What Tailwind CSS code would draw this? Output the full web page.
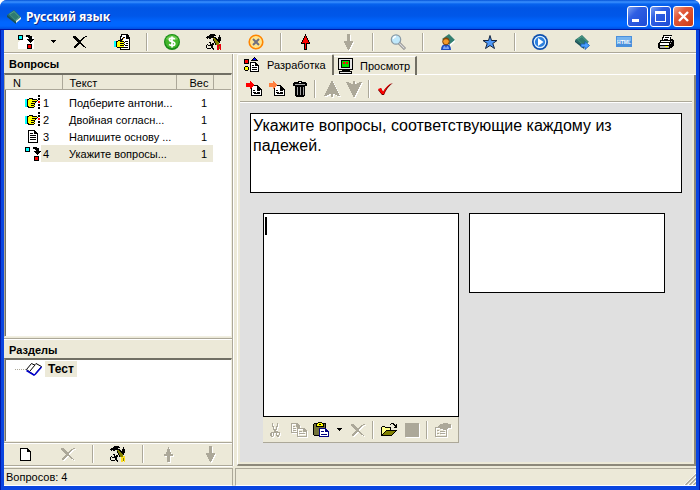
<!DOCTYPE html>
<html lang="ru">
<head>
<meta charset="utf-8">
<title>Русский язык</title>
<script src="https://cdn.jsdelivr.net/npm/@tailwindcss/browser@4"></script>
</head>
<body class="bg-white font-['Liberation_Sans',Arial,sans-serif] text-[11px] leading-[14px] text-black">
<svg class="hidden" aria-hidden="true">
  <defs>
    <symbol id="link" viewBox="0 0 16 16"><path fill="#000" d="M0 1h5v5H0zM8 1h4v1h2v3h2v1h-1v1h-1v1h-1v1h-1V8h-1V7h-1V6H9V5h2V4h-1V3H8zM9 10h5v5H9z"/><path fill="#0ff" d="M1 2h3v3H1z"/><path fill="red" d="M10 11h3v3h-3z"/></symbol>
    <symbol id="cross" viewBox="0 0 16 16"><path fill="currentColor" d="M1 2h3v1h1v1h1v1h1v1h2V5h1V4h1V3h2V2h2v1h-2v1h-1v1h-1v1h-1v1H9v2h1v1h1v1h1v1h1v1h1v1h-1v-1h-2v-1h-1v-1H9v-1H7v1H6v1H5v1H4v1H2v-2h1v-1h1v-1h1V9h1V8H5V7H4V6H3V5H2V4H1z"/></symbol>
    <symbol id="tools" viewBox="0 0 16 16"><path fill="#000" d="M3 1h1V0h5v1h1v1H8v1h1v1H8v1H7V4H5v1H3V4H2v1H1V4H0V3h1V2h2zM13 1h1v2h1v4h-1v2h-1V7h-1V3h1z"/><path fill="#808000" d="M7 4h2v1h1v1h1v1h1v1h1v2h1v2h1v3h-2v-2h-1v-1h-1v-1h-1V9H9V7H8V6H7z"/><path fill="#000" d="M7 5h1v2h1v2h1v2H9V9H8V7H7zM9 3h1v1h1v1h1v1h1v2h-1V7h-1V6h-1V5H9z"/><path fill="none" stroke="#000" d="M2.500 8.500h2v3h-2l-1-1-1 1v2l1 1h3l1-1v-2l1-2h1v1l-1 1v2l1 2h-1"/><path fill="currentColor" d="M11 11h2v-1h2v6h-1v-4h-1v4h-2z"/></symbol>
    <symbol id="up" viewBox="0 0 16 16"><path fill="currentColor" d="M8 1h1v2h1v3h1v2h2v2h-3v6H7v-6H4V8h2V6h1V3h1z"/></symbol>
    <symbol id="down" viewBox="0 0 16 16"><path fill="currentColor" d="M7 0h3v7h3v2h-1v2h-1v2h-1v2H9v1H8v-1H7v-2H6v-2H5V9H4V7h3z"/></symbol>
    <symbol id="hand" viewBox="0 0 16 16"><path fill="#ff0" d="M2 4h6v1h4v2h-2v5H3L2 11z"/><path fill="#0ff" d="M0 4h2v8H0z"/><path fill="#000" d="M2 4h2V3h4v1H4v1H3v6h1v1h5v1H3v-1H2zM7 4h5v1h1v1h-1v1H7V6h5V5H7zM6 8h4v1H6zM6 10h3v1H6zM10 7h1v1h-1zM9 9h1v1H9zM9 11h1v1H9zM13 0h2v2h-2zM13 3h2v2h-2zM13 9h2v2h-2zM13 12h2v2h-2z"/><path fill="red" d="M13 6h2v2h-2z"/></symbol>
    <symbol id="doc" viewBox="0 0 16 16"><path fill="#000" d="M3 1h7v1h1v1h1v1h1v10H3z"/><path fill="#fff" d="M4 2h5v3h3v8H4z"/><path d="M5 4h3v1H5zM5 6h6v1H5zM5 8h6v1H5zM5 10h6v1H5z"/></symbol>
    <symbol id="page" viewBox="0 0 16 16"><path d="M5 4h7v1h1v1h1v1h1v1h1v7H5z"/><path fill="#fff" d="M6 5h5v4h4v5H6z"/><path d="M7 9h2v1H7zM11 9h3v1h-3zM7 11h3v1H7zM11 11h3v1h-3zM8 13h6v-1H8z"/></symbol>
    <symbol id="book" viewBox="0 0 16 16"><path fill="#2a6e68" d="M1 6 8 1l7 7-5 6z"/><path fill="#55a68b" d="m3 5 5-3 6 6-4 4z"/><path fill="#2f7a70" d="m4 5.500 4-2.500 5 5-3.500 3z"/><path fill="#185058" d="m1 6 9 7v2L1 8z"/><path fill="#f4f7e9" d="m10 12 5-4v2l-5 4z"/></symbol>
    <symbol id="vup" viewBox="0 0 16 16"><path fill="currentColor" d="M7 0h2v2h1v2h1v2h1v2h1v2h1v2h1v2h1v1h-3v-1h-2v-1H9v3H7v-3H5v1H3v1H0v-1h1v-2h1v-2h1V8h1V6h1V4h1V2h1z"/></symbol>
  </defs>
</svg>

<div class="flex h-screen min-h-[440px] flex-col overflow-hidden rounded-t-[7px] bg-[#0a45e0]">
  <header class="flex h-[30px] shrink-0 items-center bg-[linear-gradient(#0453d8_0px,#3b91ff_2px,#0763ee_4px,#0055e5_8px,#0057e9_16px,#0066ff_22px,#0066ff_26px,#004fe0_29px,#003bc6_30px)] pr-[6px] pl-[6px] pt-[3px]">
    <svg class="h-4 w-4" viewBox="0 0 16 16"><use href="#book"/></svg>
    <h1 class="ml-[4px] flex-1 font-['Noto_Sans','Open_Sans',sans-serif] text-[12px] leading-5 font-bold text-white [text-shadow:1px_1px_#0b2a8a]">Русский язык</h1>
    <div class="flex gap-[2px]">
      <button aria-label="Свернуть" class="h-[21px] w-[21px] rounded-[3px] border border-white bg-[linear-gradient(135deg,#7ba0f2,#2f5fe3_35%,#1d4bd6)]"><svg class="h-[19px] w-[19px]" viewBox="0 0 19 19"><path fill="#fff" d="M4 12h7v3H4z"/></svg></button>
      <button aria-label="Развернуть" class="h-[21px] w-[21px] rounded-[3px] border border-white bg-[linear-gradient(135deg,#7ba0f2,#2f5fe3_35%,#1d4bd6)]"><svg class="h-[19px] w-[19px]" viewBox="0 0 19 19"><path fill="#fff" fill-rule="evenodd" d="M4 4h11v11H4zM5 7v7h9V7z"/></svg></button>
      <button aria-label="Закрыть" class="h-[21px] w-[21px] rounded-[3px] border border-white bg-[linear-gradient(135deg,#f0a58c,#e2593a_35%,#cc3a12)]"><svg class="h-[19px] w-[19px]" viewBox="0 0 19 19"><path stroke="#fff" stroke-width="2.4" d="m5 5 9 9m0-9-9 9"/></svg></button>
    </div>
  </header>

  <div class="mx-px flex min-h-0 flex-1 flex-col border-x-[3px] border-b-4 border-[#0a45e0] bg-[#ece9d8] shadow-[0_0_0_1px_#0019a8]">
    <div role="toolbar" aria-label="Главная панель" class="flex h-[24px] shrink-0 items-center border-b border-white pl-px shadow-[inset_0_-1px_#aca899]">
      <button aria-label="Добавить вопрос" class="flex w-[42px] justify-center"><svg class="h-4 w-4" shape-rendering="crispEdges" viewBox="0 0 16 16"><path fill="#fff" d="M5 3h11v12H0V8z"/><use href="#link"/></svg></button>
      <button aria-label="Тип вопроса" class="flex w-[12px] justify-center"><svg class="h-[3px] w-[5px]" viewBox="0 0 5 3" shape-rendering="crispEdges"><path d="M0 0h5v1H4v1H3v1H2V2H1V1H0z"/></svg></button>
      <button aria-label="Удалить" class="flex w-[42px] justify-center"><svg class="h-4 w-4" shape-rendering="crispEdges"><use href="#cross"/></svg></button>
      <button aria-label="Изменить" class="flex w-[42px] justify-center"><svg class="h-4 w-4" viewBox="0 0 16 16" shape-rendering="crispEdges"><path d="M7 0h7v1h1v2h1v13H6V2h1z"/><path fill="#fff" d="M8 1h5v3h2v11H7V3h1z"/><path d="M12 1h1v3h2v1h-3zM11 7h3v1h-3zM12 9h2v1h-2zM11 11h3v1h-3zM9 13h5v1H9z"/><path fill="#ff0" d="M2 7h2V6h5v2h1v5H3z"/><path fill="#0ff" d="M0 7h2v6H0z"/><path d="M2 7h2v1H3v5h6v1H3v-1H2zM4 6h3v1H4zM7 5h1V4h1V3h2v1h-1v1H9v1H8v1h2v1H6V7h1zM6 9h4v1H6zM6 11h4v1H6zM10 8h1v1h-1zM10 10h1v1h-1z"/><path fill="#f90" d="M9 4h1v1H9z"/></svg></button>
      <span class="mx-[3px] h-[18px] w-[2px] border-r border-white bg-[#aca899]"></span>
      <button aria-label="Стоимость" class="flex w-[42px] justify-center"><svg class="h-4 w-4" viewBox="0 0 16 16"><circle cx="8" cy="8" r="8" fill="#168b16"/><circle cx="8" cy="7.5" r="6.8" fill="#43b52b"/><path fill="#8bd66e" opacity=".65" d="M2 5a6.5 5 0 0 1 12 0Q8 8 2 5z"/><path fill="none" stroke="#fff" stroke-width="1.7" d="M10.8 5.1C9 3.6 5.3 3.7 5.4 5.9 5.5 8.2 10.8 7 10.8 9.7c0 2.3-4 2.3-5.700.7M8 2.5v11"/></svg></button>
      <button aria-label="Параметры" class="flex w-[42px] justify-center text-red-600"><svg class="h-4 w-4" shape-rendering="crispEdges"><use href="#tools"/></svg></button>
      <button aria-label="Отмена" class="flex w-[42px] justify-center"><svg class="h-4 w-4" viewBox="0 0 16 16"><circle cx="8" cy="8" r="6.8" fill="#ffe58e" stroke="#ff8500" stroke-width="1.6"/><path stroke="#707080" stroke-width="2" d="m5 5 6 6m0-6-6 6"/></svg></button>
      <span class="mx-[3px] h-[18px] w-[2px] border-r border-white bg-[#aca899]"></span>
      <button aria-label="Вверх" class="flex w-[42px] justify-center"><svg class="h-4 w-4" viewBox="0 0 16 16" shape-rendering="crispEdges"><path d="M7 0h1v2h1v2h1v2h1v2h1v2H9v6H6v-6H3V8h1V6h1V4h1V2h1z"/><path fill="red" d="M7 2h1v2h1v2h1v2h1v1H8v6H7V9H4V8h1V6h1V4h1z"/></svg></button>
      <button aria-label="Вниз" disabled class="flex w-[42px] justify-center text-[#aca899] drop-shadow-[1px_1px_0_#fff]"><svg class="h-4 w-4" shape-rendering="crispEdges"><use href="#down"/></svg></button>
      <span class="mx-[3px] h-[18px] w-[2px] border-r border-white bg-[#aca899]"></span>
      <button aria-label="Поиск" class="flex w-[42px] justify-center"><svg class="h-4 w-4" viewBox="0 0 16 16"><path stroke="#858585" stroke-width="3" d="m9 9 6 6"/><path stroke="#ddd" stroke-width="1.2" d="m9 9 5.5 5.5"/><circle cx="6" cy="5.5" r="4.7" fill="#bfe8fb" stroke="#8a9aa5" stroke-width="1.2"/><path fill="none" stroke="#fff" stroke-width="1.3" d="M3.3 5Q3.5 2.8 6 2.5"/></svg></button>
      <span class="mx-[3px] h-[18px] w-[2px] border-r border-white bg-[#aca899]"></span>
      <button aria-label="Ученик" class="flex w-[42px] justify-center"><svg class="h-4 w-4" viewBox="0 0 16 16"><path fill="#347f70" d="m2 5 7-5 6 6-5 5z"/><path fill="#fff" d="m10 10 5-4v2l-5 4z"/><path fill="#1c4cc0" d="M1 16q0-6 5-6t5 6z"/><path fill="#7ba3f4" d="M3 15q0-3 2-3l1 2 1-2q2 0 2 3z"/><circle cx="6" cy="7.5" r="3.3" fill="#f59a28" stroke="#7a400b"/><path fill="#84450a" d="M3 6q1-3 4-2.5 2 .5 2 2.5Q6 4.500 3 6z"/></svg></button>
      <button aria-label="Избранное" class="flex w-[42px] justify-center"><svg class="h-4 w-4" viewBox="0 0 16 16"><path fill="#4c97f8" stroke="#14233d" d="m8 1.500 1.500 5H15L10.800 9.500l1.700 5L8 11.500l-4.500 3 1.700-5L1 6.500h5.500z"/></svg></button>
      <span class="mx-[3px] h-[18px] w-[2px] border-r border-white bg-[#aca899]"></span>
      <button aria-label="Запуск" class="flex w-[42px] justify-center"><svg class="h-4 w-4" viewBox="0 0 16 16"><circle cx="8" cy="8" r="8" fill="#0d4fae"/><circle cx="8" cy="8" r="5.700" fill="#2d80dd" stroke="#d9efff" stroke-width="1.200"/><path fill="#fff" d="m6 4 5.500 4L6 12z"/></svg></button>
      <button aria-label="Экспорт" class="flex w-[42px] justify-center"><svg class="h-4 w-4" viewBox="0 0 16 16"><use href="#book"/><path fill="#4ba0ff" stroke="#175ab4" stroke-width=".8" d="M7 10h4V7.500l4.500 4-4.500 4V13H7z"/></svg></button>
      <button aria-label="HTML" class="flex w-[42px] justify-center"><svg class="h-4 w-4" viewBox="0 0 16 16"><path fill="#4a90dc" d="M0 2h16v11H0z"/><path fill="#76b4ef" d="M1 3h14v4H1z"/><text x="8" y="10" text-anchor="middle" fill="#fff" font-size="5" font-weight="bold" font-family="Liberation Sans">HTML</text></svg></button>
      <button aria-label="Печать" class="flex w-[42px] justify-center"><svg class="h-4 w-4" viewBox="0 0 16 16" shape-rendering="crispEdges"><path d="M5 1h9v1h-1v3h2v1h1v6h-1v1h-1v1h-2v1H1v-1H0V9h1V8h1V6h2V3h1z"/><path fill="#fff" d="M6 2h7v1h-1v3H5V4h1zM3 7h9v1H3zM2 9h9v2H2z"/><path d="M7 3h4v1H7zM6 5h4v1H6z"/><path fill="#b5b5b5" d="M2 12h9v2H2zM13 7h1v1h-1zM12 9h1v1h-1z"/><path fill="#ff0" d="M7 12h3v1H7z"/></svg></button>
    </div>

    <main class="flex min-h-0 flex-1">
      <aside class="flex w-[229px] shrink-0 flex-col border-r border-[#aca899] shadow-[1px_0_#fff]">
        <h2 class="h-[19px] pt-[3px] pl-[5px] font-bold">Вопросы</h2>
        <section class="min-h-0 flex-1 border border-t-2 border-t-[#716f64] border-l-[#aca899] border-r-[#f1efe2] border-b-[#f1efe2] bg-white shadow-[inset_1px_0_#716f64]">
          <table class="w-full table-fixed border-collapse">
            <colgroup><col class="w-[57px]"><col class="w-[114px]"><col class="w-[37px]"><col></colgroup>
            <thead><tr class="h-[15px] bg-[#ece9d8] shadow-[inset_0_-1px_#aca899]">
              <th class="border-r border-[#aca899] p-0 pl-[8px] text-left font-normal">N</th>
              <th class="border-r border-l border-r-[#aca899] border-l-white p-0 pl-[7px] text-left font-normal">Текст</th>
              <th class="border-r border-[#aca899] p-0 pr-[4px] text-right font-normal">Вес</th><th class="p-0"></th></tr></thead>
            <tbody>
              <tr class="h-[4px]"><td colspan="4" class="p-0"></td></tr>
              <tr class="h-[17px]"><td class="p-0 pl-[20px]"><span class="flex items-center"><svg class="h-4 w-4" shape-rendering="crispEdges"><use href="#hand"/></svg><span class="pl-[2px]">1</span></span></td><td class="truncate p-0 pl-[7px]">Подберите антони...</td><td class="p-0 pr-[6px] text-right">1</td><td></td></tr>
              <tr class="h-[17px]"><td class="p-0 pl-[20px]"><span class="flex items-center"><svg class="h-4 w-4" shape-rendering="crispEdges"><use href="#hand"/></svg><span class="pl-[2px]">2</span></span></td><td class="truncate p-0 pl-[7px]">Двойная согласн...</td><td class="p-0 pr-[6px] text-right">1</td><td></td></tr>
              <tr class="h-[17px]"><td class="p-0 pl-[20px]"><span class="flex items-center"><svg class="h-4 w-4" shape-rendering="crispEdges"><use href="#doc"/></svg><span class="pl-[2px]">3</span></span></td><td class="truncate p-0 pl-[7px]">Напишите основу ...</td><td class="p-0 pr-[6px] text-right">1</td><td></td></tr>
              <tr class="h-[17px]" aria-selected="true"><td class="p-0 pl-[20px]"><span class="flex items-center"><svg class="h-4 w-4" shape-rendering="crispEdges"><use href="#link"/></svg><span class="h-[17px] flex-1 bg-[#ece9d8] pt-[2px] pl-[2px]">4</span></span></td><td class="truncate bg-[#ece9d8] p-0 pl-[7px]">Укажите вопросы...</td><td class="bg-[#ece9d8] p-0 pr-[6px] text-right">1</td><td></td></tr>
            </tbody>
          </table>
        </section>
        <h2 class="mt-px h-[20px] border-t border-[#aca899] pt-[4px] pl-[5px] font-bold shadow-[inset_0_1px_#fff]">Разделы</h2>
        <section class="h-[84px] shrink-0 border border-t-2 border-t-[#716f64] border-l-[#aca899] border-r-[#f1efe2] border-b-[#f1efe2] bg-white shadow-[inset_1px_0_#716f64]">
          <div class="flex items-center pt-px pl-[10px]"><span class="w-[11px] border-t border-dotted border-[#aca899]"></span>
            <svg class="h-4 w-4" viewBox="0 0 16 16"><path fill="#fff" stroke="#000" d="m.5 8.500 5-6 3 1.500 1.500-1.500 5.500 3-6 7-1.500 1.500z"/><path fill="none" stroke="#00c" stroke-width="1.500" d="m.5 9.500 7.500 4.500 1.500-1L15.500 6"/><path stroke="#000" d="M9 4 4 10"/></svg>
            <span class="ml-[3px] bg-[#ece9d8] px-[3px] py-px text-[12px] font-bold">Тест</span></div>
        </section>
        <div role="toolbar" aria-label="Разделы" class="flex h-[24px] shrink-0 items-center border-y border-[#aca899] pl-px shadow-[inset_0_1px_#fff,0_1px_#fff]">
          <button aria-label="Новый раздел" class="flex w-[42px] justify-center"><svg class="h-4 w-4" viewBox="0 0 16 16" shape-rendering="crispEdges"><path d="M2 2h8v1h1v1h1v1h1v10H2z"/><path fill="#fff" d="M3 3h6v3h3v8H3z"/></svg></button>
          <button aria-label="Удалить раздел" disabled class="flex w-[42px] justify-center text-[#aca899] drop-shadow-[1px_1px_0_#fff]"><svg class="h-4 w-4" shape-rendering="crispEdges"><use href="#cross"/></svg></button>
          <span class="mx-[3px] h-[18px] w-[2px] border-r border-white bg-[#aca899]"></span>
          <button aria-label="Параметры раздела" class="flex w-[42px] justify-center text-yellow-300"><svg class="h-4 w-4" shape-rendering="crispEdges"><use href="#tools"/></svg></button>
          <span class="mx-[3px] h-[18px] w-[2px] border-r border-white bg-[#aca899]"></span>
          <button aria-label="Раздел вверх" disabled class="flex w-[42px] justify-center text-[#aca899] drop-shadow-[1px_1px_0_#fff]"><svg class="h-4 w-4" shape-rendering="crispEdges"><use href="#up"/></svg></button>
          <button aria-label="Раздел вниз" disabled class="flex w-[42px] justify-center text-[#aca899] drop-shadow-[1px_1px_0_#fff]"><svg class="h-4 w-4" shape-rendering="crispEdges"><use href="#down"/></svg></button>
        </div>
      </aside>

      <section class="ml-[4px] flex min-w-0 flex-1 flex-col">
        <div role="tablist" class="flex h-[21px] shrink-0 items-end shadow-[inset_0_-1px_#fff]">
          <button role="tab" aria-selected="true" class="flex h-[21px] w-[97px] items-center gap-[7px] rounded-t-[2px] border-t border-r-2 border-l border-t-white border-r-[#716f64] border-l-white bg-[#ece9d8] pl-[6px]"><svg class="h-4 w-4 shrink-0" viewBox="0 0 16 16" shape-rendering="crispEdges"><path d="M0 2h5v5H0zM1 9h3v1h1v3H4v1H1v-1H0v-3h1z"/><path fill="red" d="M1 3h3v3H1z"/><path fill="#ff0" d="M1 10h3v3H1z"/><path d="M10 0h1v1h1v1h1v1h1v1H7V3h1V2h1V1h1z"/><path fill="#00f" d="M10 1h1v1h1v1H9V2h1z"/><path d="M6 5h6v1h1v1h1v1h1v7H6z"/><path fill="#fff" d="M7 6h4v3h3v5H7z"/><path d="M8 8h2v1H8zM8 10h5v1H8zM8 12h5v1H8z"/></svg>Разработка</button>
          <button role="tab" aria-selected="false" class="flex h-[19px] w-[83px] items-center gap-[6px] border-t border-r-2 border-t-white border-r-[#716f64] bg-[#ece9d8] pl-[4px] shadow-[inset_0_-1px_#fff]"><svg class="h-4 w-4 shrink-0" viewBox="0 0 16 16" shape-rendering="crispEdges"><path d="M0 0h15v12h-3v1h2v3H1v-3h3v-1H0z"/><path fill="#e5e5e5" d="M1 1h13v10H1zM2 14h11v1H2z"/><path d="M3 2h9v8H3z"/><path fill="#0d0" d="M4 3h7v6H4z"/><path fill="red" d="M5 4h2v2H5zM8 4h2v2H8z"/></svg>Просмотр</button>
        </div>
        <div class="flex min-h-0 flex-1 flex-col border-r-2 border-b-2 border-l border-r-[#8c887a] border-b-[#8c887a] border-l-white px-[2px] pb-[2px]">
          <div role="toolbar" aria-label="Элементы" class="flex h-[28px] shrink-0 items-center border-b border-white pl-[2px] shadow-[inset_0_-1px_#aca899]">
            <button aria-label="Вставить до" class="flex w-[23px] justify-center"><svg class="h-4 w-4" viewBox="0 0 16 16" shape-rendering="crispEdges"><use href="#page"/><path fill="red" d="M0 2h4V0h1v1h1v1h1v1h1v2H7v1H6v1H5v1H4V6H0z"/></svg></button>
            <button aria-label="Вставить после" class="flex w-[23px] justify-center"><svg class="h-4 w-4" viewBox="0 0 16 16" shape-rendering="crispEdges"><use href="#page"/><path fill="#ff8040" d="M0 2h4V0h1v1h1v1h1v1h1v2H7v1H6v1H5v1H4V6H0z"/></svg></button>
            <button aria-label="Очистить" class="flex w-[23px] justify-center"><svg class="h-4 w-4" viewBox="0 0 16 16" shape-rendering="crispEdges"><path d="M6 0h4v1h4v1h1v3h-2v10h-1v1H4v-1H3V5H1V2h1V1h4z"/><path fill="#a5a5a5" d="M3 3h10v1H3zM5 6h1v8H5zM8 6h1v8H8zM11 6h1v8h-1z"/><path fill="#fff" d="M7 1h2v1H7z"/></svg></button>
            <span class="mr-[5px] ml-[3px] h-[18px] w-[2px] border-r border-white bg-[#aca899]"></span>
            <button aria-label="Выше" disabled class="flex w-[22px] justify-center text-[#aca899] drop-shadow-[1px_1px_0_#fff]"><svg class="h-4 w-4" shape-rendering="crispEdges"><use href="#vup"/></svg></button>
            <button aria-label="Ниже" disabled class="flex w-[22px] justify-center text-[#aca899] drop-shadow-[1px_1px_0_#fff]"><svg class="h-4 w-4 rotate-180" shape-rendering="crispEdges"><use href="#vup"/></svg></button>
            <span class="mr-[3px] ml-[3px] h-[18px] w-[2px] border-r border-white bg-[#aca899]"></span>
            <button aria-label="Принять" class="flex w-[23px] justify-center"><svg class="h-4 w-4" viewBox="0 0 16 16"><path fill="#600" d="m1 9 3-2 2 4q4-7 10-9-6 4-9 12H5z"/><path fill="red" d="m1 8 3-1 2 4q4-7 9-9-6 4-8 11H5z"/></svg></button>
          </div>

          <div class="flex min-h-0 flex-1 flex-col bg-[#e0e0e0] px-[10px] pt-[10px]">
            <textarea aria-label="Текст вопроса" class="block h-[80px] w-full shrink-0 resize-none overflow-hidden border border-black bg-white py-[2px] pr-[18px] pl-[2px] text-[16px] leading-5 outline-none">Укажите вопросы, соответствующие каждому из падежей.</textarea>
            <div class="mt-[20px] grid grid-cols-2 items-start gap-[10px] pr-[17px] pl-[13px]">
              <div class="min-w-0">
                <div class="relative">
                  <textarea aria-label="Левый элемент" class="block h-[204px] w-full resize-none border border-black bg-white p-[2px] text-[16px] outline-none"></textarea>
                  <span class="absolute top-[4px] left-[2px] h-[18px] w-[2px] bg-black"></span>
                </div>
                <div role="toolbar" aria-label="Правка" class="flex h-[26px] items-center border-r border-b border-[#aca899] bg-[#ece9d8]">
                  <button aria-label="Вырезать" disabled class="flex w-[24px] justify-center text-[#aca899] drop-shadow-[1px_1px_0_#fff]"><svg class="h-4 w-4" viewBox="0 0 16 16" shape-rendering="crispEdges"><path fill="currentColor" fill-rule="evenodd" d="M5 1h1v3h1v3h2V4h1V1h1v4h-1v3H9v1h2v1h2v3h-1v2h-2v-1H9v-3H7v3H6v1H4v-1H3v-3h1v-1h3V8H6V5H5zM5 11v3h1v-3zM10 11v2h2v-2z"/></svg></button>
                  <button aria-label="Копировать" disabled class="flex w-[23px] justify-center text-[#aca899] drop-shadow-[1px_1px_0_#fff]"><svg class="h-4 w-4" viewBox="0 0 16 16" shape-rendering="crispEdges"><path fill="currentColor" fill-rule="evenodd" d="M0 1h6l3 3v2h4l3 3v6H6v-4H0zM1 2v8h5V5H5V2zM7 7v7h8v-4h-3V7zM2 4h2v1H2zM2 6h3v1H2zM2 8h3v1H2zM8 9h3v1H8zM8 11h6v1H8z"/></svg></button>
                  <button aria-label="Вставить" class="flex w-[22px] justify-center"><svg class="h-4 w-4" viewBox="0 0 16 16" shape-rendering="crispEdges"><path d="M1 1h4V0h4v1h4v6h-1v7H1v-1H0V2h1z"/><path fill="#73733a" d="M1 2h11v11H1z"/><path d="M3 2h8v3H3z"/><path fill="#ff0" d="M5 1h4v1h1v2H4V2h1z"/><path d="M6 2h2v1H6z"/><path fill="#000080" d="M6 6h7v1h1v1h1v1h1v6H6z"/><path fill="#fff" d="M7 7h5v3h3v4H7z"/><path fill="#000080" d="M8 9h3v1H8zM8 12h6v1H8z"/></svg></button>
                  <button aria-label="Варианты вставки" class="flex w-[14px] justify-center"><svg class="h-[3px] w-[5px]" viewBox="0 0 5 3" shape-rendering="crispEdges"><path d="M0 0h5v1H4v1H3v1H2V2H1V1H0z"/></svg></button>
                  <button aria-label="Удалить текст" disabled class="flex w-[23px] justify-center text-[#aca899] drop-shadow-[1px_1px_0_#fff]"><svg class="h-4 w-4" shape-rendering="crispEdges"><use href="#cross"/></svg></button>
                  <span class="mx-[3px] h-[18px] w-[2px] border-r border-white bg-[#aca899]"></span>
                  <button aria-label="Открыть" class="flex w-[23px] justify-center"><svg class="h-4 w-4" viewBox="0 0 16 16" shape-rendering="crispEdges"><path d="M9 2h1V1h3v1h1v1h1V2h1v4h-3V5h1V4h-1V3h-1V2h-2v1H9zM1 4h3v1h6v3h6v1h-1v1h-1v1h-1v1h-1v1h-1v1H0V5h1z"/><path fill="#ff8" d="M1 5h3v1h5v2H5v1H4v1H3v1H2v1H1z"/><path fill="#808000" d="M5 9h9v1h-1v1h-1v1h-1v1H2v-1h1v-1h1v-1h1z"/></svg></button>
                  <button aria-label="Цвет" disabled class="flex w-[23px] justify-center text-[#aca899] drop-shadow-[1px_1px_0_#fff]"><svg class="h-4 w-4" viewBox="0 0 16 16"><path fill="currentColor" d="M1 1h14v14H1z"/></svg></button>
                  <span class="mx-[3px] h-[18px] w-[2px] border-r border-white bg-[#aca899]"></span>
                  <button aria-label="Свойства" disabled class="flex w-[24px] justify-center text-[#aca899] drop-shadow-[1px_1px_0_#fff]"><svg class="h-4 w-4" viewBox="0 0 16 16" shape-rendering="crispEdges"><path fill="currentColor" fill-rule="evenodd" d="M5 2h3V1h5v1h3v4h-3v1h-1v8H0V5h3V4h1V3h1zM1 6v8h10V8H8V7H5V6zM2 8h2v1H2zM5 9h5v1H5zM2 11h2v1H2zM5 11h5v1H5z"/></svg></button>
                </div>
              </div>
              <textarea aria-label="Правый элемент" class="block h-[80px] w-full min-w-0 resize-none border border-black bg-white p-[2px] text-[16px] outline-none"></textarea>
            </div>
          </div>
        </div>
      </section>
    </main>

    <footer class="mt-[2px] flex h-[18px] shrink-0 gap-[2px]">
      <div class="w-[229px] border-t border-r border-b border-t-[#aca899] border-r-[#aca899] border-b-white pt-px pl-[2px]">Вопросов: 4</div>
      <div class="flex flex-1 items-end justify-end border-t border-b border-l border-t-[#aca899] border-b-white border-l-[#aca899]"><svg class="h-3 w-3" viewBox="0 0 12 12"><path stroke="#fff" d="M0 12 12 0M4 12l8-8M8 12l4-4"/><path stroke="#aca899" stroke-width="1.500" d="M1.500 12 12 1.500M5.500 12 12 5.500M9.500 12 12 9.500"/></svg></div>
    </footer>
  </div>
</div>
</body>
</html>
